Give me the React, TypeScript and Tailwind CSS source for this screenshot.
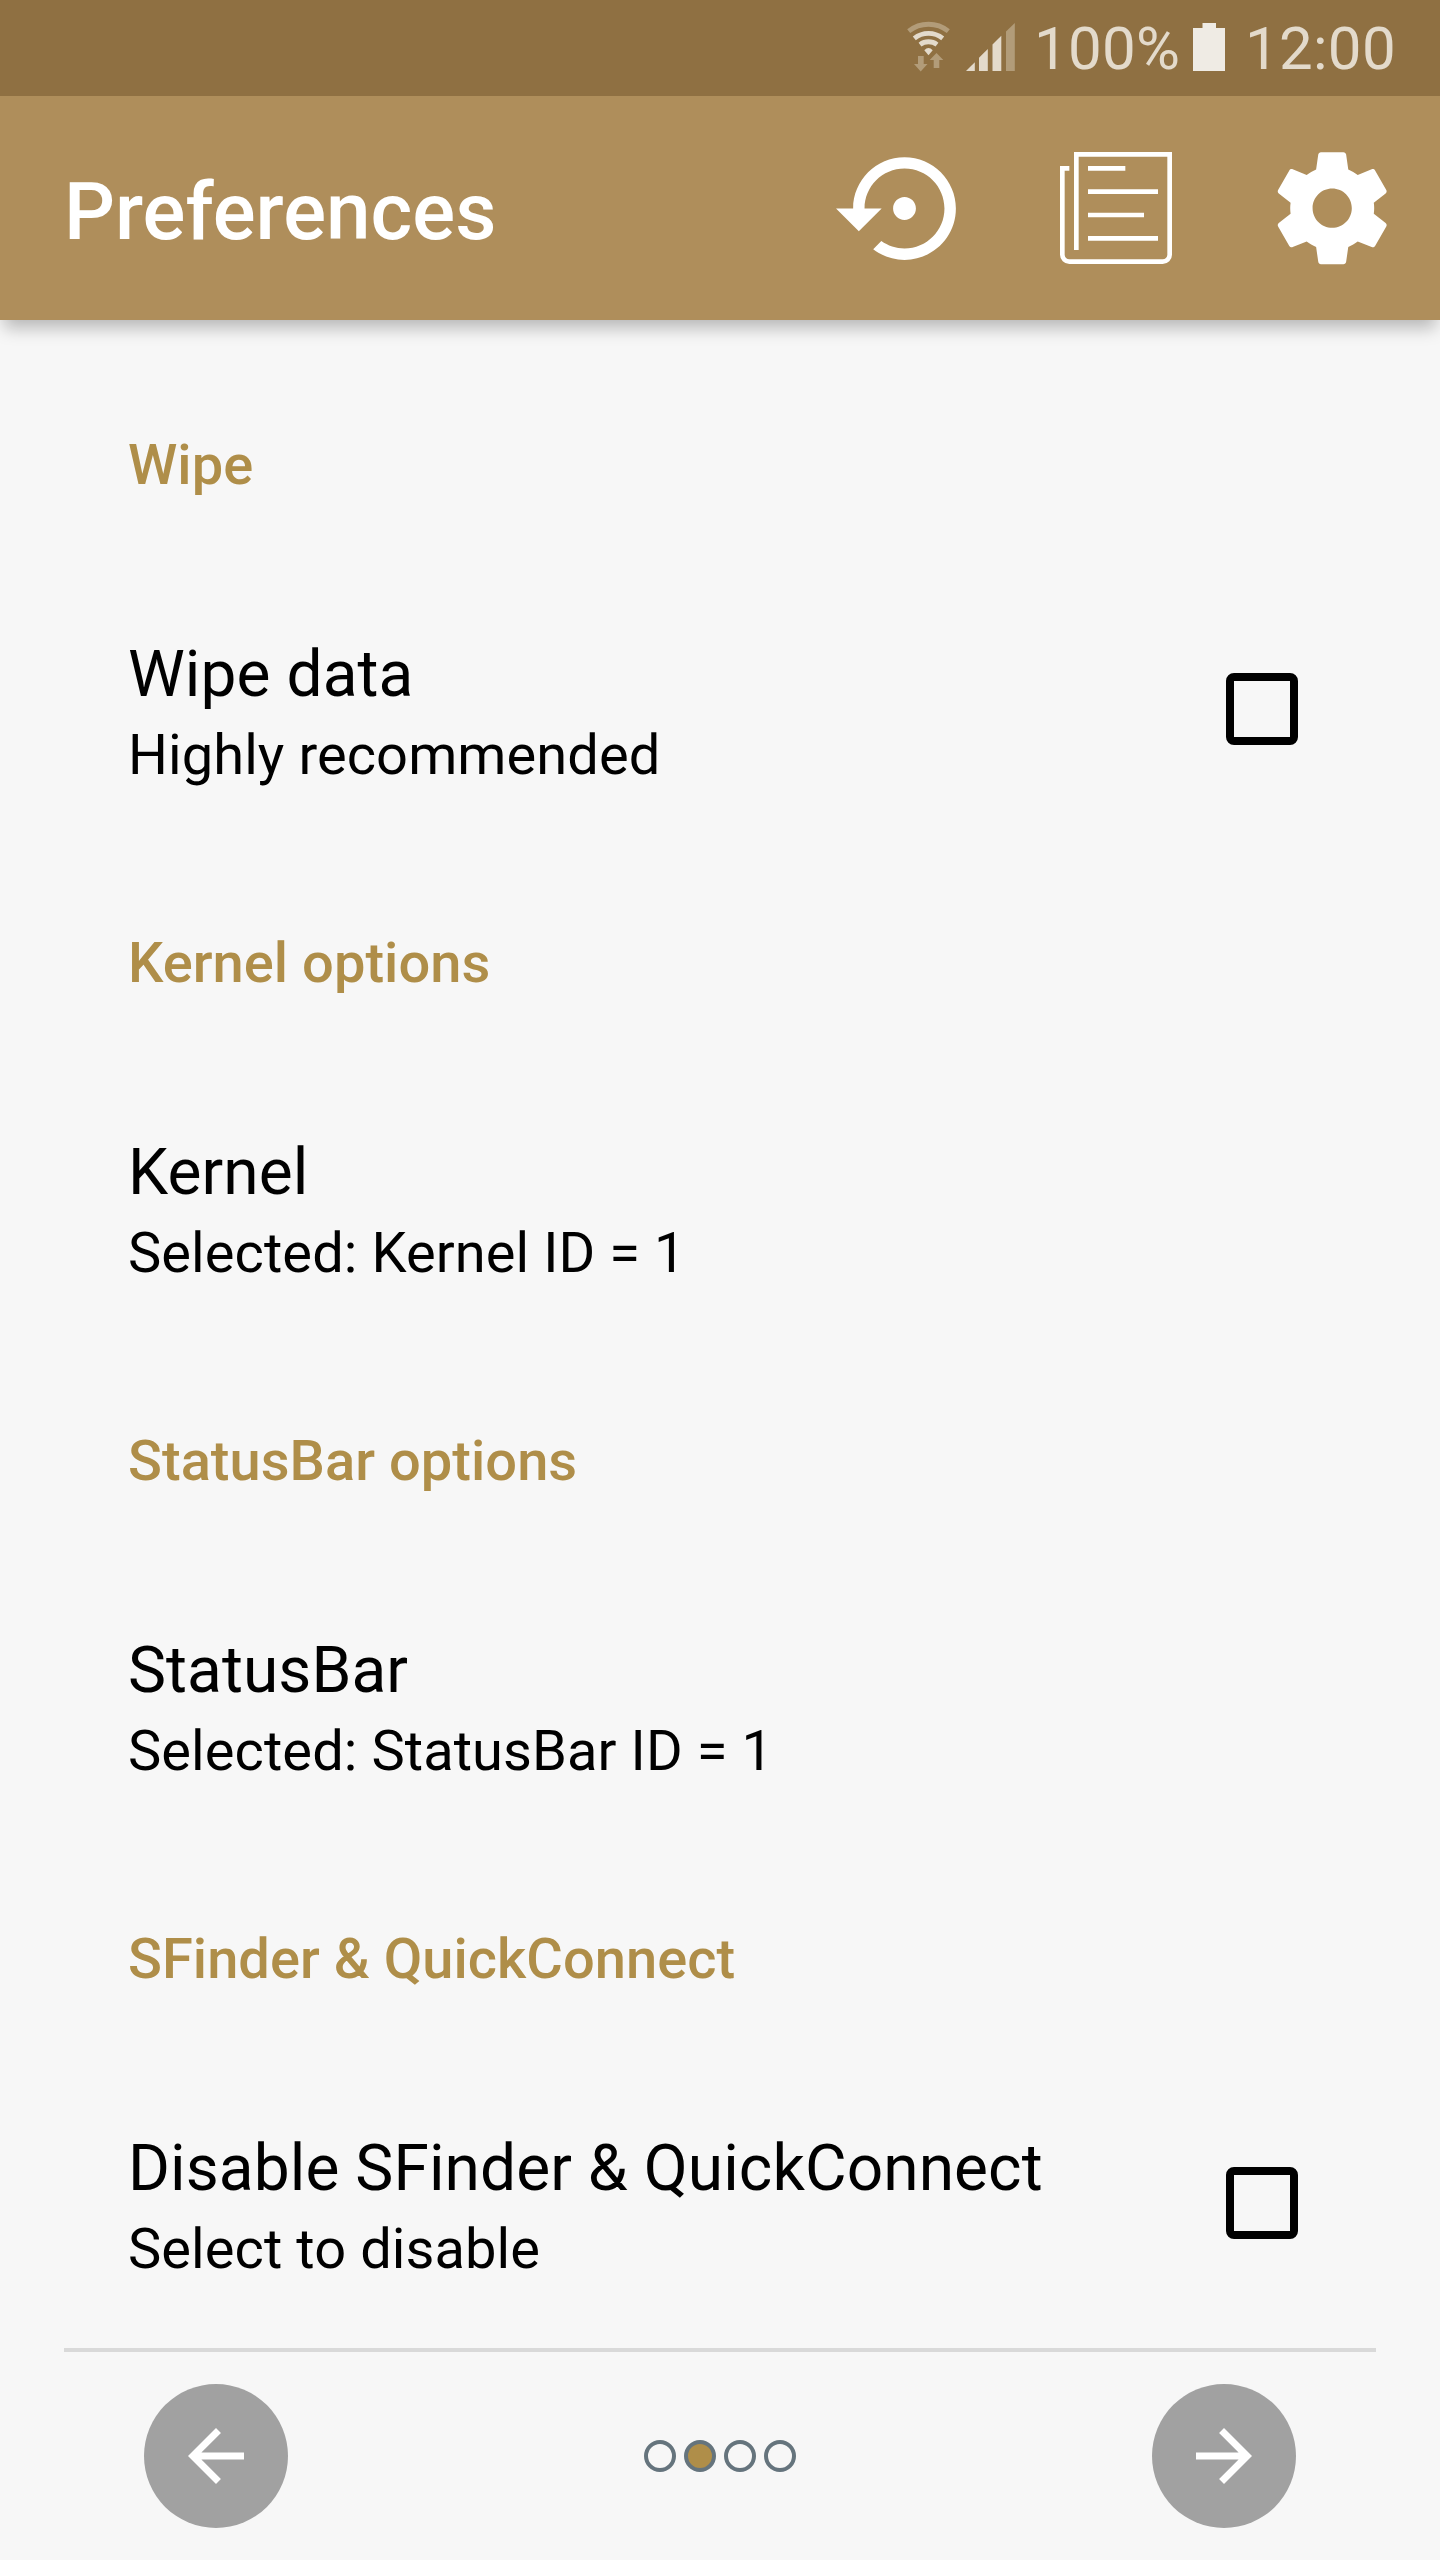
import type { ReactNode } from "react";

type Entry = { title: string; summary: string; checkbox?: boolean };
type Section = { heading: string; entry: Entry };

const sections: Section[] = [
  { heading: "Wipe", entry: { title: "Wipe data", summary: "Highly recommended", checkbox: true } },
  { heading: "Kernel options", entry: { title: "Kernel", summary: "Selected: Kernel ID = 1" } },
  { heading: "StatusBar options", entry: { title: "StatusBar", summary: "Selected: StatusBar ID = 1" } },
  {
    heading: "SFinder & QuickConnect",
    entry: { title: "Disable SFinder & QuickConnect", summary: "Select to disable", checkbox: true },
  },
];

function WifiIcon() {
  return (
    <svg className="h-[56px] w-[44px]" viewBox="0 0 44 56" fill="none" stroke="#e3dacb" strokeWidth="4.8">
      <path d="M1.7 11.2A31.700 31.700 0 0 1 41.300 11.200" stroke="#b29c79" />
      <path d="M7.300 18.400A22.700 22.700 0 0 1 35.700 18.400" />
      <path d="M13 24.600A14.200 14.200 0 0 1 30 24.600" />
      <path d="M17.300 30.200Q21.500 25.600 25.700 30.200L21.500 35.300Z" fill="#e3dacb" stroke="none" />
      <path d="M11 36h5.700v8h3.800l-6.800 7.500L7 44h4z" fill="#b29c79" stroke="none" />
      <path d="M26.700 48v-8h-4l6.800-7 6.800 7h-4v8z" fill="#b29c79" stroke="none" />
    </svg>
  );
}

function SignalIcon() {
  return (
    <svg className="h-[48px] w-[49px]" viewBox="0 0 49 48" fill="#e3dacb">
      <path d="M0 48l8.800-8.800V48z" />
      <path d="M13 48V34.800l8.800-8.800v22z" />
      <path d="M26.500 48V21.500l8.800-8.800V48z" />
      <path d="M40 48V8.500L48.800 0v48z" fill="#b29c79" />
    </svg>
  );
}

function BatteryIcon() {
  return (
    <svg className="h-[48px] w-[32px]" viewBox="0 0 32 48" fill="#efebe4">
      <path d="M9.500 0h13.500v5H32v43H0V5h9.500z" />
    </svg>
  );
}

function RestoreIcon() {
  return (
    <svg className="size-[137px]" viewBox="0 0 24 24" fill="#fff">
      <path d="M14 12c0-1.100-.9-2-2-2s-2 .9-2 2 .9 2 2 2 2-.9 2-2zm-2-9c-4.970 0-9 4.030-9 9H0l4 4 4-4H5c0-3.870 3.130-7 7-7s7 3.130 7 7-3.130 7-7 7c-1.510 0-2.910-.49-4.060-1.300l-1.420 1.440C8.040 20.300 9.940 21 12 21c4.970 0 9-4.030 9-9s-4.030-9-9-9z" />
    </svg>
  );
}

function ChangelogIcon() {
  return (
    <svg className="size-[112px]" viewBox="0 0 24 24" fill="none" stroke="#fff">
      <path d="M2 3.500H.5v18.500a1.500 1.500 0 0 0 1.500 1.500h20a1.500 1.500 0 0 0 1.500-1.500V.5h-20V21" />
      <path d="M6 3.500h8M6 8.500h15M6 13.500h12M6 18.500h15" />
    </svg>
  );
}

function GearIcon() {
  return (
    <svg className="size-[134.4px]" viewBox="0 0 24 24" fill="#fff">
      <path d="M19.430 12.980c.04-.32.07-.64.07-.98s-.03-.66-.07-.98l2.110-1.650c.19-.15.24-.42.12-.64l-2-3.460c-.12-.22-.39-.3-.61-.22l-2.490 1c-.52-.4-1.080-.73-1.690-.98l-.38-2.650C14.460 2.180 14.250 2 14 2h-4c-.25 0-.46.18-.49.42l-.38 2.650c-.61.25-1.170.59-1.690.98l-2.490-1c-.23-.09-.49 0-.61.22l-2 3.460c-.13.22-.07.49.12.64l2.110 1.650c-.04.32-.07.65-.07.98s.03.66.07.98l-2.110 1.650c-.19.15-.24.42-.12.64l2 3.460c.12.22.39.3.61.22l2.490-1c.52.4 1.080.73 1.690.98l.38 2.650c.03.24.24.42.49.42h4c.25 0 .46-.18.49-.42l.38-2.650c.61-.25 1.170-.59 1.690-.98l2.490 1c.23.09.49 0 .61-.22l2-3.460c.12-.22.07-.49-.12-.64l-2.110-1.650zM12 15.500c-1.930 0-3.500-1.570-3.500-3.500s1.570-3.500 3.500-3.500 3.500 1.570 3.500 3.500-1.570 3.500-3.500 3.500z" />
    </svg>
  );
}

function RoundButton({ label, children }: { label: string; children: ReactNode }) {
  return (
    <button aria-label={label} className="flex size-[144px] items-center justify-center rounded-full bg-[#a1a1a1]">
      <svg className="size-[84px]" viewBox="0 0 24 24" fill="#fff">
        {children}
      </svg>
    </button>
  );
}

function Preference({ title, summary, checkbox }: Entry) {
  return (
    <div className="mt-[139px] flex h-[151px] items-start justify-between tracking-[0.08px]">
      <div>
        <div className="text-[64px] leading-[75px]">{title}</div>
        <div className="mt-[10px] text-[56px] leading-[66px]">{summary}</div>
      </div>
      {checkbox && <div className="mt-[36px] size-[72px] rounded-[8px] border-8 border-black" />}
    </div>
  );
}

export default function App() {
  return (
    <div className="flex h-[2560px] w-[1440px] flex-col overflow-hidden bg-[#f7f7f7] font-['Roboto',sans-serif] text-black">
      <div className="z-20 flex h-24 shrink-0 items-start bg-[#8f7042] text-[60px] leading-[70px] tracking-[0.3px] text-[#e3dacb]">
        <div className="mt-[20px] ml-[907px]"><WifiIcon /></div>
        <div className="mt-[23px] ml-[15px]"><SignalIcon /></div>
        <div className="mt-[14px] ml-[19px] w-[146px]">100%</div>
        <div className="mt-[23px] ml-[13px]"><BatteryIcon /></div>
        <div className="mt-[14px] ml-[20px]">12:00</div>
      </div>
      <header className="z-10 flex h-[224px] shrink-0 items-center bg-[#af8e5b] shadow-[0_12px_16px_-4px_rgba(0,0,0,0.26)]">
        <h1 className="ml-16 w-[772px] pt-2 text-[80px] leading-[94px] font-medium text-white">Preferences</h1>
        <RestoreIcon />
        <div className="ml-[87px]"><ChangelogIcon /></div>
        <div className="ml-[93px]"><GearIcon /></div>
      </header>
      <main className="flex h-[2028px] shrink-0 flex-col gap-[142px] pt-[112px] pr-[142px] pl-[128px]">
        {sections.map(({ heading, entry }) => (
          <section key={heading} className="h-[356px] shrink-0">
            <h2 className="text-[56px] leading-[66px] font-medium tracking-[0.04px] text-[#af8e49]">{heading}</h2>
            <Preference {...entry} />
          </section>
        ))}
      </main>
      <div className="mx-16 h-1 shrink-0 bg-[#d9d9d9]" />
      <footer className="mt-8 flex items-center justify-between px-[144px]">
        <RoundButton label="Previous">
          <path d="M20 11H7.830l5.590-5.590L12 4l-8 8 8 8 1.410-1.410L7.830 13H20v-2z" />
        </RoundButton>
        <div className="flex gap-2">
          <span className="size-8 rounded-full border-4 border-[#65747d]" />
          <span className="size-8 rounded-full border-4 border-[#65747d] bg-[#af8e49]" />
          <span className="size-8 rounded-full border-4 border-[#65747d]" />
          <span className="size-8 rounded-full border-4 border-[#65747d]" />
        </div>
        <RoundButton label="Next">
          <path d="M12 4l-1.410 1.410L16.170 11H4v2h12.170l-5.580 5.590L12 20l8-8z" />
        </RoundButton>
      </footer>
    </div>
  );
}
